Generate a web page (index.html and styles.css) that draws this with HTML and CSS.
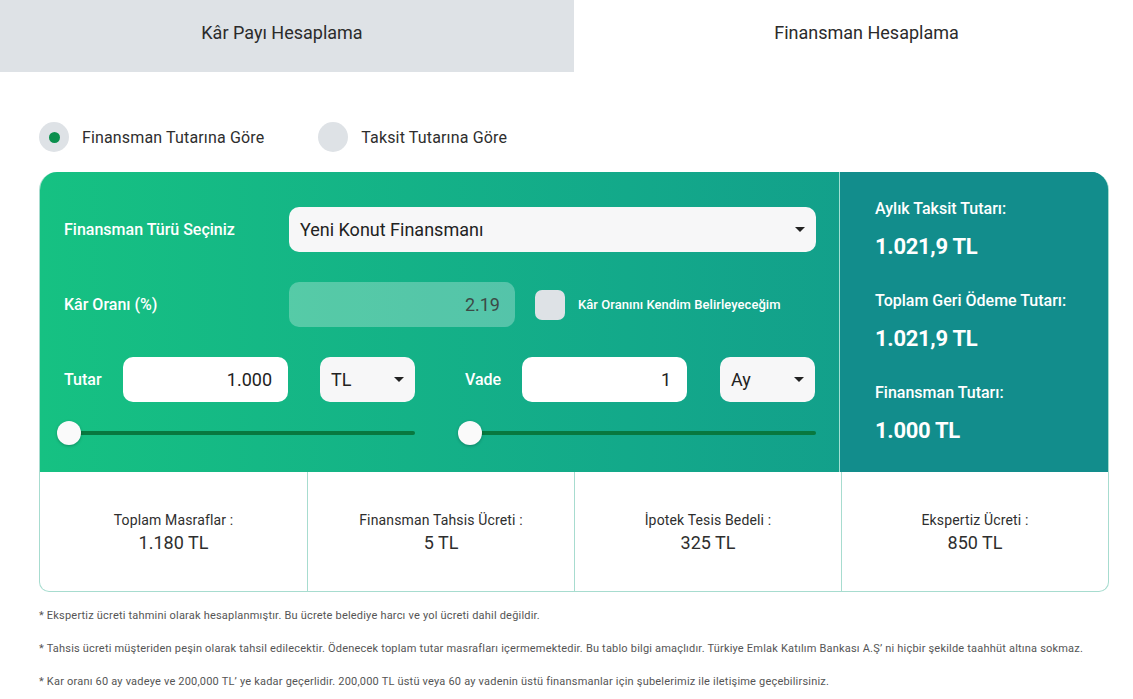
FILE: index.html
```html
<!DOCTYPE html>
<html lang="tr">
<head>
<meta charset="utf-8">
<title>Finansman Hesaplama</title>
<link rel="stylesheet" href="styles.css">
</head>
<body>
<div class="tabs">
  <div class="tab first">Kâr Payı Hesaplama</div>
  <div class="tab active">Finansman Hesaplama</div>
</div>

<div class="radios">
  <label class="radio checked"><span class="dot"></span>Finansman Tutarına Göre</label>
  <label class="radio"><span class="dot"></span>Taksit Tutarına Göre</label>
</div>

<div class="calc">
  <div class="top">
    <div class="form">
      <div class="row">
        <div class="lbl wide">Finansman Türü Seçiniz</div>
        <div class="select big">Yeni Konut Finansmanı<span class="caret"></span></div>
      </div>
      <div class="row">
        <div class="lbl wide">Kâr Oranı (%)</div>
        <div class="rate">2.19</div>
        <span class="check"></span>
        <span class="checklbl">Kâr Oranını Kendim Belirleyeceğim</span>
      </div>
      <div class="pair">
        <div class="half">
          <div class="lbl short">Tutar</div>
          <div class="input">1.000</div>
          <div class="select small">TL<span class="caret"></span></div>
        </div>
        <div class="half">
          <div class="lbl short second">Vade</div>
          <div class="input">1</div>
          <div class="select small">Ay<span class="caret"></span></div>
        </div>
      </div>
      <div class="pair sliders">
        <div class="slider"><span class="thumb"></span></div>
        <div class="slider"><span class="thumb"></span></div>
      </div>
    </div>
    <div class="results">
      <div class="rlabel">Aylık Taksit Tutarı:</div>
      <div class="rvalue">1.021,9 TL</div>
      <div class="rlabel">Toplam Geri Ödeme Tutarı:</div>
      <div class="rvalue">1.021,9 TL</div>
      <div class="rlabel">Finansman Tutarı:</div>
      <div class="rvalue">1.000 TL</div>
    </div>
  </div>
  <div class="costs">
    <div class="cost"><div class="clabel">Toplam Masraflar :</div><div class="cvalue">1.180 TL</div></div>
    <div class="cost"><div class="clabel">Finansman Tahsis Ücreti :</div><div class="cvalue">5 TL</div></div>
    <div class="cost"><div class="clabel">İpotek Tesis Bedeli :</div><div class="cvalue">325 TL</div></div>
    <div class="cost"><div class="clabel">Ekspertiz Ücreti :</div><div class="cvalue">850 TL</div></div>
  </div>
</div>

<div class="notes">
  <p>* Ekspertiz ücreti tahmini olarak hesaplanmıştır. Bu ücrete belediye harcı ve yol ücreti dahil değildir.</p>
  <p>* Tahsis ücreti müşteriden peşin olarak tahsil edilecektir. Ödenecek toplam tutar masrafları içermemektedir. Bu tablo bilgi amaçlıdır. Türkiye Emlak Katılım Bankası A.Ş’ ni hiçbir şekilde taahhüt altına sokmaz.</p>
  <p>* Kar oranı 60 ay vadeye ve 200,000 TL’ ye kadar geçerlidir. 200,000 TL üstü veya 60 ay vadenin üstü finansmanlar için şubelerimiz ile iletişime geçebilirsiniz.</p>
</div>
</body>
</html>
```

FILE: styles.css
```css
* { box-sizing: border-box; }
html, body { margin: 0; padding: 0; background: #fff; }
body {
  font-family: Roboto, "Liberation Sans", sans-serif;
  color: #333;
  width: 1133px;
  height: 699px;
  overflow: hidden;
}

.tabs {
  display: grid;
  grid-template-columns: 574px 1fr;
  height: 72px;
}
.tab {
  display: flex;
  align-items: center;
  justify-content: center;
  font-size: 18px;
  color: #2b2b2b;
  background: #dee2e6;
  padding-bottom: 8px;
  letter-spacing: 0;
}
.tab.first { padding-right: 10px; }
.tab.active { background: #fff; padding-left: 26px; }

.radios {
  display: flex;
  gap: 54px;
  padding: 50px 0 0 39px;
  height: 100px;
}
.radio {
  display: flex;
  align-items: center;
  gap: 13px;
  font-size: 16px;
  color: #2e2e2e;
  height: 30px;
  letter-spacing: 0.15px;
}
.dot {
  width: 30px;
  height: 30px;
  border-radius: 50%;
  background: #dee2e6;
  display: flex;
  align-items: center;
  justify-content: center;
}
.radio.checked .dot::after {
  content: "";
  width: 11px;
  height: 11px;
  border-radius: 50%;
  background: #0a8f4d;
}

.calc {
  margin-left: 39px;
  width: 1070px;
  border: 1px solid #a7dccf;
  border-top: 0;
  border-radius: 18px 18px 10px 10px;
  overflow: hidden;
}
.top {
  display: flex;
  height: 300px;
  background: linear-gradient(90deg, #16c182 0%, #13a98a 55%, #12958c 100%);
}
.form {
  flex: 1;
  padding: 35px 23px 0 24px;
  border-right: 1px solid rgba(210, 245, 235, 0.75);
}
.row {
  display: flex;
  align-items: center;
  height: 45px;
  margin-bottom: 30px;
}
.lbl {
  color: #fff;
  font-size: 16px;
  font-weight: 500;
  letter-spacing: 0;
}
.lbl.wide { width: 225px; flex: none; }
.lbl.short { width: 59px; flex: none; }
.lbl.short.second { width: 57px; }

.select {
  position: relative;
  height: 45px;
  border-radius: 10px;
  background: #f7f7f8;
  color: #222;
  font-size: 18px;
  display: flex;
  align-items: center;
  padding-left: 11px;
}
.select.big { flex: 1; }
.select.small { width: 95px; flex: none; }
.caret {
  position: absolute;
  right: 11px;
  top: 20px;
  width: 0;
  height: 0;
  border-left: 5px solid transparent;
  border-right: 5px solid transparent;
  border-top: 5px solid #222;
}

.rate {
  width: 226px;
  height: 45px;
  border-radius: 10px;
  background: rgba(255, 255, 255, 0.28);
  color: #3c4a46;
  font-size: 18px;
  display: flex;
  align-items: center;
  justify-content: flex-end;
  padding-right: 15px;
}
.check {
  width: 30px;
  height: 30px;
  border-radius: 7px;
  background: #dee2e6;
  margin-left: 20px;
  margin-right: 13px;
}
.checklbl {
  color: #fff;
  font-size: 13px;
  font-weight: 500;
  letter-spacing: 0.05px;
}

.pair {
  display: grid;
  grid-template-columns: 1fr 1fr;
  gap: 50px;
}
.half {
  display: flex;
  align-items: center;
  height: 45px;
}
.input {
  width: 165px;
  height: 45px;
  margin-right: 32px;
  border-radius: 10px;
  background: #fff;
  color: #222;
  font-size: 18px;
  display: flex;
  align-items: center;
  justify-content: flex-end;
  padding-right: 16px;
}
.half .lbl.second + .input { margin-right: 33px; }

.sliders { margin-top: 29px; }
.slider {
  position: relative;
  height: 4px;
  margin-left: 5px;
  background: #08783f;
  border-radius: 2px;
}
.thumb {
  position: absolute;
  left: -12px;
  top: -10px;
  width: 24px;
  height: 24px;
  border-radius: 50%;
  background: #fafafa;
  box-shadow: 0 1px 3px rgba(0, 0, 0, 0.25);
}

.results {
  width: 268px;
  flex: none;
  background: #128d8c;
  padding: 27px 0 0 35px;
  color: #fff;
}
.rlabel {
  font-size: 16px;
  font-weight: 500;
  letter-spacing: 0;
  line-height: 20px;
}
.rvalue {
  font-size: 22px;
  font-weight: 700;
  letter-spacing: -0.3px;
  line-height: 30px;
  margin-top: 13px;
  margin-bottom: 29px;
}

.costs {
  display: grid;
  grid-template-columns: 268px 267px 267px 1fr;
  height: 119px;
}
.cost {
  border-right: 1px solid #a7dccf;
  display: flex;
  flex-direction: column;
  align-items: center;
  justify-content: center;
  color: #2e2e2e;
  padding-top: 2px;
}
.cost:last-child { border-right: 0; }
.clabel { font-size: 14px; letter-spacing: 0.15px; line-height: 18px; }
.cvalue { font-size: 18px; line-height: 24px; margin-top: 2px; }

.notes {
  padding: 16px 0 0 39px;
}
.notes p {
  margin: 0 0 18px;
  font-size: 11px;
  line-height: 15px;
  color: #555;
  letter-spacing: 0.2px;
}
```
